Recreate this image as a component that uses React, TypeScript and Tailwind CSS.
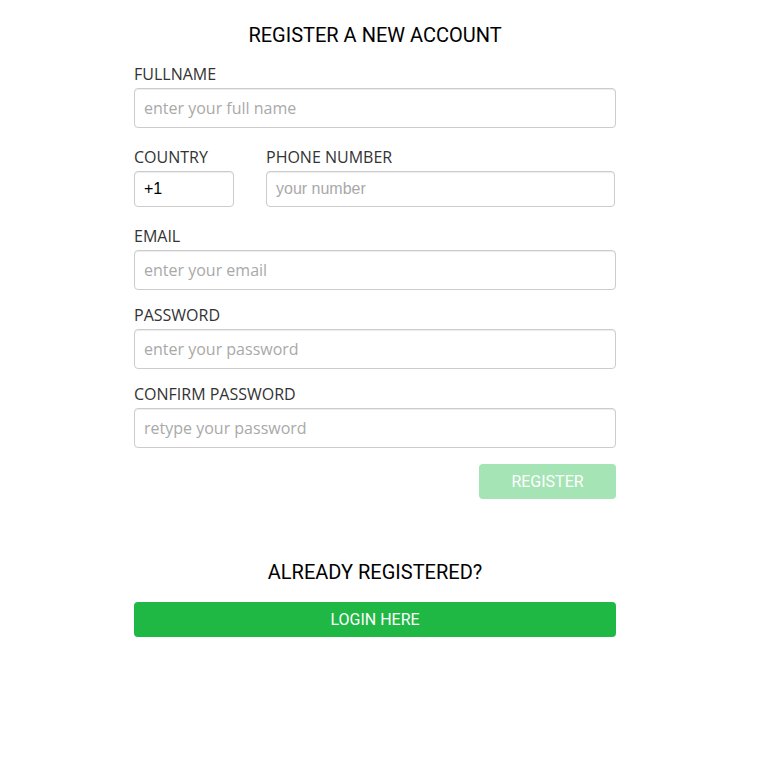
import React from "react";

const labelCls = "block text-[16px] leading-[24px] text-[#333] uppercase";
const inputBase =
  "block w-full rounded-[4px] border border-[#cccccc] px-[9px] text-[16px] text-black placeholder:text-[#a9a9a9] outline-none shadow-[inset_0_1px_1px_rgba(0,0,0,0.075)] mt-[2px]";
const inputCls = `${inputBase} h-[40px]`;
const smallInputCls = `${inputBase} h-[36px]`;

export default function App() {
  return (
    <div className="min-h-[762px] w-[771px] bg-white" style={{ fontFamily: "'Open Sans', sans-serif" }}>
      <div className="ml-[134px] w-[482px] pt-[23px]">
        <h1 className="text-center text-[20px] leading-[24px] text-black" style={{ fontFamily: "Roboto, sans-serif" }}>
          REGISTER A NEW ACCOUNT
        </h1>
        <div className="mt-[15px]">
          <label className={labelCls}>Fullname</label>
          <input className={inputCls} placeholder="enter your full name" />
        </div>
        <div className="mt-[17px] flex gap-[32px]">
          <div className="w-[100px]">
            <label className={labelCls}>Country</label>
            <input
              className={smallInputCls}
              style={{ fontFamily: "'Liberation Sans', Arial, sans-serif" }}
              defaultValue="+1"
            />
          </div>
          <div className="w-[349px]">
            <label className={labelCls}>Phone Number</label>
            <input
              className={smallInputCls}
              style={{ fontFamily: "'Liberation Sans', Arial, sans-serif" }}
              placeholder="your number"
            />
          </div>
        </div>
        <div className="mt-[17px]">
          <label className={labelCls}>Email</label>
          <input className={inputCls} placeholder="enter your email" />
        </div>
        <div className="mt-[13px]">
          <label className={labelCls}>Password</label>
          <input className={inputCls} placeholder="enter your password" type="password" />
        </div>
        <div className="mt-[13px]">
          <label className={labelCls}>Confirm Password</label>
          <input className={inputCls} placeholder="retype your password" type="password" />
        </div>
        <div className="mt-[16px] flex justify-end">
          <button
            className="h-[35px] w-[137px] rounded-[4px] bg-[#a5e4b5] text-[16px] text-white"
            style={{ fontFamily: "Roboto, sans-serif" }}
          >
            REGISTER
          </button>
        </div>
        <h2 className="mt-[61px] text-center text-[20px] leading-[24px] text-black" style={{ fontFamily: "Roboto, sans-serif" }}>
          ALREADY REGISTERED?
        </h2>
        <button
          className="mt-[18px] block h-[35px] w-full rounded-[4px] bg-[#1fb845] text-[16px] text-white"
          style={{ fontFamily: "Roboto, sans-serif" }}
        >
          LOGIN HERE
        </button>
      </div>
    </div>
  );
}
